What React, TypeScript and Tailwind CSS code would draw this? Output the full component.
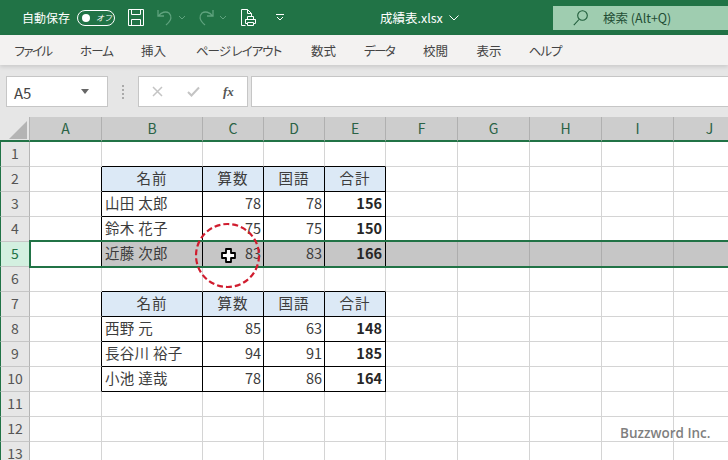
const sans = '"Noto Sans CJK JP","Liberation Sans",sans-serif';
const cols = ["A", "B", "C", "D", "E", "F", "G", "H", "I", "J"];
const widths = [72, 101, 61, 61, 61, 72, 72, 72, 72, 72];
const tabs: [string, string][] = [
  ["ファイル", "w-[58px] tracking-[-1.5px]"],
  ["ホーム", "w-[69px] tracking-[-1px]"],
  ["挿入", "w-[45px]"],
  ["ページ レイアウト", "w-[125px] tracking-[-1px]"],
  ["数式", "w-[45px]"],
  ["データ", "w-[66px] tracking-[-1.5px]"],
  ["校閲", "w-[47px]"],
  ["表示", "w-[60px]"],
  ["ヘルプ", "w-[52px] tracking-[-1px]"],
];
type Row = { name: string; c: string; d: string; e: string; head?: boolean };
const rows: Record<number, Row> = {
  2: { name: "名前", c: "算数", d: "国語", e: "合計", head: true },
  3: { name: "山田 太郎", c: "78", d: "78", e: "156" },
  4: { name: "鈴木 花子", c: "75", d: "75", e: "150" },
  5: { name: "近藤 次郎", c: "83", d: "83", e: "166" },
  7: { name: "名前", c: "算数", d: "国語", e: "合計", head: true },
  8: { name: "西野 元", c: "85", d: "63", e: "148" },
  9: { name: "長谷川 裕子", c: "94", d: "91", e: "185" },
  10: { name: "小池 達哉", c: "78", d: "86", e: "164" },
};

function Cell({ row, col }: { row: number; col: number }) {
  const data = rows[row];
  const below = rows[row + 1];
  const inTable = col >= 1 && col <= 4;
  const selected = row === 5;
  const right = col >= 0 && col <= 4 && data ? "border-r-black" : selected ? "border-r-[#adadad]" : "border-r-[#d4d4d4]";
  const bottom = inTable && (data || below) ? "border-b-black" : "border-b-[#d4d4d4]";
  const bg = selected && col > 0 ? "bg-[#c6c6c6]" : data?.head && inTable ? "bg-[#dce9f6]" : "bg-white";
  let text = "";
  if (data && inTable) text = [data.name, data.c, data.d, data.e][col - 1];
  const bold = col === 4 && !data?.head;
  const align = data?.head
    ? "justify-center"
    : col === 1
      ? "justify-start pl-[3px]"
      : bold
        ? "justify-end pr-[3px]"
        : "justify-end pr-[2px]";
  const weight = bold ? "font-bold text-[#262626]" : "font-normal text-[#3c3c3c]";
  const tracking = data?.head ? "tracking-[1px]" : col === 1 ? "tracking-[0.3px]" : "";
  return (
    <div className={`flex items-center pb-[2px] border-r border-b border-solid ${right} ${bottom} ${bg} ${align} ${weight} ${tracking} text-[14.5px] overflow-hidden whitespace-nowrap`}>
      {text}
    </div>
  );
}

export default function App() {
  const rowNums = Array.from({ length: 13 }, (_, i) => i + 1);
  return (
    <div className="relative w-[728px] h-[460px] overflow-hidden bg-white" style={{ fontFamily: sans }}>
      {/* Title bar */}
      <div className="flex items-center h-[35px] bg-[#217346] text-white">
        <span className="ml-[22px] text-[12px] w-[50px] whitespace-nowrap">自動保存</span>
        <div className="ml-[5px] flex items-center w-[38px] h-[16px] rounded-full border border-white">
          <span className="ml-[4px] w-[8px] h-[8px] rounded-full bg-white" />
          <span className="ml-[6px] text-[8px] italic whitespace-nowrap">オフ</span>
        </div>
        <svg className="ml-[13px]" width="16" height="17" viewBox="0 0 16 17" fill="none" stroke="#fff" strokeWidth="1">
          <path d="M.5.5h15v16H.5zM3.5.5v5h9v-5M3.5 16.5v-6h9v6" />
        </svg>
        <svg className="ml-[13px]" width="16" height="17" viewBox="0 0 16 17" fill="none" stroke="#5fa37e" strokeWidth="1.3">
          <path d="M1 1v6h6M1.500 7C4 3 9 2 12 4c3 3 3 7-3 12" />
        </svg>
        <svg className="ml-[5px]" width="8" height="5" viewBox="0 0 8 5" fill="none" stroke="#5fa37e"><path d="M1 1l3 3 3-3" /></svg>
        <svg className="ml-[12px]" width="16" height="17" viewBox="0 0 16 17" fill="none" stroke="#5fa37e" strokeWidth="1.3">
          <path d="M15 1v6H9M14.500 7C12 3 7 2 4 4c-3 3-3 7 3 12" />
        </svg>
        <svg className="ml-[5px]" width="8" height="5" viewBox="0 0 8 5" fill="none" stroke="#5fa37e"><path d="M1 1l3 3 3-3" /></svg>
        <svg className="ml-[13px]" width="16" height="18" viewBox="0 0 16 18" fill="none" stroke="#fff" strokeWidth="1">
          <path d="M5.500 16.500H1.500V.5h6l4 4v3M7.500.5v4h4M7.500 10.500h-2v4h2M13.500 10.500h2v4h-2M7.500 7.500h6v3h-6zM7.500 13.500h6v3h-6zM5.500 10.500h10" />
        </svg>
        <svg className="ml-[20px]" width="8" height="7" viewBox="0 0 8 7" fill="none" stroke="#fff"><path d="M0 .5h8M1 3l3 3 3-3" /></svg>
        <div className="ml-[96px] w-[69px] pt-[1px] flex items-center text-[12.5px] whitespace-nowrap [font-feature-settings:'palt']">
          <span>成績表.xlsx</span>
        </div>
        <svg width="10" height="6" viewBox="0 0 10 6" fill="none" stroke="#fff"><path d="M.5.5L5 5 9.500.5" /></svg>
        <div className="ml-[94px] flex items-center flex-1 h-[24px] mb-[5px] bg-[#9fcdb0] text-[#1f4d35] self-end">
          <svg className="ml-[20px]" width="15" height="16" viewBox="0 0 15 16" fill="none" stroke="#1f5c3a" strokeWidth="1.1">
            <circle cx="9.500" cy="5.500" r="4.800" /><path d="M6 9.500L.8 15.200" />
          </svg>
          <span className="ml-[15px] text-[12.5px] whitespace-nowrap">検索 (Alt+Q)</span>
        </div>
      </div>

      {/* Tabs */}
      <div className="flex items-center h-[30px] pt-[2px] bg-[#f3f2f1] pl-[4px] shadow-[0_2px_4px_rgba(0,0,0,0.12)] relative [font-feature-settings:'palt']">
        {tabs.map(([label, w]) => (
          <span key={label} className={`${w} text-center text-[12.5px] text-[#444] whitespace-nowrap`}>{label}</span>
        ))}
      </div>

      {/* Formula bar */}
      <div className="flex items-start h-[52px] bg-[#e6e6e6] pt-[11px] pl-[6px]">
        <div className="flex items-center w-[102px] h-[31px] bg-white border border-[#c6c6c6] pl-[7px] text-[15px] text-[#444]">
          <span className="pt-[3px]">A5</span>
          <svg className="ml-[50px]" width="8" height="5" viewBox="0 0 8 5"><path d="M0 0h8L4 5z" fill="#666" /></svg>
        </div>
        <div className="w-[30px] h-[31px] flex flex-col items-center justify-center gap-[2px]">
          <span className="w-[2px] h-[2px] bg-[#aaa]" />
          <span className="w-[2px] h-[2px] bg-[#aaa]" />
          <span className="w-[2px] h-[2px] bg-[#aaa]" />
          <span className="w-[2px] h-[2px] bg-[#aaa]" />
        </div>
        <div className="flex items-center w-[110px] h-[31px] bg-white border border-[#c6c6c6]">
          <svg className="ml-[13px]" width="11" height="11" viewBox="0 0 11 11" fill="none" stroke="#c4c4c4" strokeWidth="1.500"><path d="M1 1l9 9M10 1l-9 9" /></svg>
          <svg className="ml-[24px]" width="13" height="11" viewBox="0 0 13 11" fill="none" stroke="#c4c4c4" strokeWidth="2"><path d="M1 6l3.500 3.500L12 1.500" /></svg>
          <span className="ml-[23px] text-[13px] italic font-bold text-[#555]" style={{ fontFamily: '"Liberation Serif",serif' }}>fx</span>
        </div>
        <div className="ml-[3px] flex-1 h-[31px] bg-white border-y border-l border-[#c6c6c6]" />
      </div>

      {/* Sheet */}
      <div className="relative">
        <div
          className="grid"
          style={{
            gridTemplateColumns: `30px ${widths.map((w) => w + "px").join(" ")}`,
            gridTemplateRows: `25px repeat(13, 25px)`,
          }}
        >
          <div className="relative bg-[#e6e6e6] border-r border-[#b5b5b5] border-b-2 border-b-[#217346]">
            <svg className="absolute left-[9px] top-[4px]" width="18" height="18" viewBox="0 0 18 18"><path d="M18 0v18H0z" fill="#b4b4b4" /></svg>
          </div>
          {cols.map((c) => (
            <div key={c} className="flex items-center justify-center bg-[#cdcdcd] border-r border-[#b0b0b0] border-b-2 border-b-[#217346] text-[14px] text-[#2a6245]">
              {c}
            </div>
          ))}
          {rowNums.map((r) => [
            <div
              key={`h${r}`}
              className={`flex items-center justify-center pb-[2px] border-l border-l-[#217346] border-r border-b border-b-[#c6c6c6] text-[14px] ${
                r === 5 ? "bg-[#d3f0e0] border-r-[#217346] text-[#217346]" : "bg-[#e6e6e6] border-r-[#b5b5b5] text-[#555]"
              }`}
            >
              {r}
            </div>,
            ...cols.map((_, i) => <Cell key={`${r}-${i}`} row={r} col={i} />),
          ])}
        </div>

        {/* Selection outline of row 5 */}
        <div className="absolute left-[29px] top-[123px] w-[710px] h-[28px] border-2 border-[#217346] pointer-events-none" />

        {/* Highlight circle */}
        <svg className="absolute left-[194px] top-[105px] pointer-events-none" width="68" height="68" viewBox="0 0 68 68" fill="none">
          <circle cx="33.500" cy="33.500" r="31.500" stroke="#d01c2e" strokeWidth="2.200" strokeDasharray="6 3" />
        </svg>

        {/* Cell cursor */}
        <svg className="absolute left-[221px] top-[131px] pointer-events-none" width="15" height="15" viewBox="0 0 15 15">
          <path d="M5 1h5v4h4v5h-4v4H5v-4H1V5h4z" fill="#fff" stroke="#000" strokeWidth="1.800" strokeLinejoin="round" />
        </svg>

        {/* Watermark */}
        <span className="absolute left-[620px] top-[306px] text-[13.5px] font-semibold text-[#7f7f7f] whitespace-nowrap" style={{ fontFamily: '"Open Sans",sans-serif' }}>
          Buzzword Inc.
        </span>
      </div>
    </div>
  );
}
